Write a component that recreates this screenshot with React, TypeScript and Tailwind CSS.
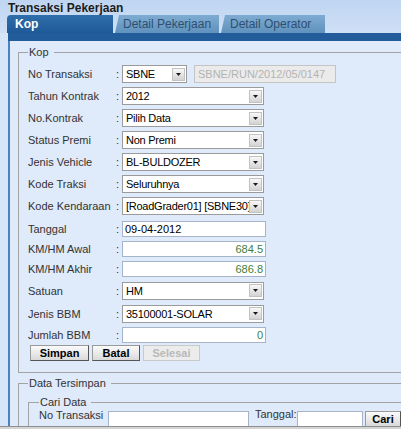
import React from "react";

const FONT = "font-['Liberation_Sans',Arial,sans-serif]";

function Arrow() {
  return (
    <div className="w-[13px] h-[13px] mr-[1px] shrink-0 flex items-center justify-center border border-[#c2c2c2] bg-linear-to-b from-[#f8f8f8] to-[#d3d3d3]">
      <svg width="5" height="3" viewBox="0 0 5 3">
        <path d="M0 0h5L2.5 3z" fill="#1a1a1a" />
      </svg>
    </div>
  );
}

function Sel({ v, w }: { v: string; w: string }) {
  return (
    <div className={`${w} h-[18px] shrink-0 flex items-center bg-white border border-[#9b9b9b]`}>
      <span className="flex-1 min-w-0 pl-[3px] text-[11px] leading-[14px] tracking-[-0.25px] text-black whitespace-nowrap">{v}</span>
      <Arrow />
    </div>
  );
}

function Txt({ v, right }: { v: string; right?: boolean }) {
  return (
    <div
      className={`w-[144px] h-[16px] shrink-0 flex items-center bg-white border border-[#a5b4c8] ${
        right ? "justify-end pr-[2px] text-[#3d7f3d]" : "pl-[2px] text-black"
      } text-[11px] leading-[14px]`}
    >
      {v}
    </div>
  );
}

function Row({ label, h, children }: { label: string; h: string; children: React.ReactNode }) {
  return (
    <div className={`flex items-center ${h}`}>
      <span className="w-[88px] shrink-0 text-[11px] leading-[14px] text-[#333] whitespace-nowrap">{label}</span>
      <span className="w-[6px] shrink-0 text-[11px] leading-[14px] text-[#333]">:</span>
      {children}
    </div>
  );
}

function Btn({ label, w, disabled }: { label: string; w: string; disabled?: boolean }) {
  return (
    <div
      className={`${w} h-[16px] flex items-center justify-center text-[11px] font-bold leading-[14px] border ${
        disabled
          ? "border-[#c9c9c9] text-[#b9b9b9] bg-[#ececec]"
          : "border-t-[#9a9a9a] border-l-[#9a9a9a] border-r-[#555] border-b-[#555] text-black bg-linear-to-b from-[#fbfbfb] to-[#d9d9d9]"
      }`}
    >
      {label}
    </div>
  );
}

export default function App() {
  return (
    <div className={`w-[401px] h-[429px] overflow-hidden flex flex-col bg-[#d6e5f8] ${FONT}`}>
      <div className="h-[426px] overflow-hidden">
        <div className="bg-linear-to-b from-[#bfd5f1] to-[#cfe0f6]">
          <div className="h-[15px] pl-[8px] pt-[1px] text-[12px] leading-[15px] font-bold text-[#1c1c1c] whitespace-nowrap">
            Transaksi Pekerjaan
          </div>
          <div className="flex h-[18px] pl-[7px] items-end">
            <div className="w-[106px] h-[18px] rounded-tl-[4px] bg-linear-to-b from-[#2f6dab] to-[#1e5a97] text-white text-[12px] font-bold leading-[18px] pl-[8px]">
              Kop
            </div>
            <div className="ml-[2px] w-[104px] h-[18px] bg-linear-to-b from-[#7eabd2] to-[#5f92bd] text-[#2f4f70] text-[12px] leading-[18px] pl-[8px] whitespace-nowrap [clip-path:polygon(4px_0,100%_0,100%_100%,0_100%)]">
              Detail Pekerjaan
            </div>
            <div className="ml-[2px] w-[104px] h-[18px] bg-linear-to-b from-[#7eabd2] to-[#5f92bd] text-[#2f4f70] text-[12px] leading-[18px] pl-[9px] whitespace-nowrap [clip-path:polygon(4px_0,100%_0,100%_100%,0_100%)]">
              Detail Operator
            </div>
          </div>
        </div>
        <div className="ml-[8px] w-[420px] h-[8px] bg-[#235c9b]" />
        <div className="ml-[8px] w-[420px] h-[400px] border-l-2 border-[#4a80c4] bg-[#dfeafa] pl-[8px] pt-[4px]">
          <fieldset className="w-[420px] border border-[#a3a3a3] pl-[9px] pt-[4px] pb-[11px]">
            <legend className="text-[11px] leading-[14px] text-[#333] pl-[1px] pr-[5px]">Kop</legend>
            <Row label="No Transaksi" h="h-[22px]">
              <Sel v="SBNE" w="w-[65px]" />
              <div className="ml-[7px] w-[142px] h-[18px] flex items-center pl-[3px] bg-[#ebebeb] border border-[#c4c4c4] text-[11px] leading-[14px] text-[#b3b3b3]">
                SBNE/RUN/2012/05/0147
              </div>
            </Row>
            <Row label="Tahun Kontrak" h="h-[22px]">
              <Sel v="2012" w="w-[142px]" />
            </Row>
            <Row label="No.Kontrak" h="h-[22px]">
              <Sel v="Pilih Data" w="w-[142px]" />
            </Row>
            <Row label="Status Premi" h="h-[22px]">
              <Sel v="Non Premi" w="w-[142px]" />
            </Row>
            <Row label="Jenis Vehicle" h="h-[22px]">
              <Sel v="BL-BULDOZER" w="w-[142px]" />
            </Row>
            <Row label="Kode Traksi" h="h-[22px]">
              <Sel v="Seluruhnya" w="w-[142px]" />
            </Row>
            <Row label="Kode Kendaraan" h="h-[22px]">
              <Sel v="[RoadGrader01] [SBNE30]" w="w-[142px]" />
            </Row>
            <div className="h-[2px]" />
            <Row label="Tanggal" h="h-[20px]">
              <Txt v="09-04-2012" />
            </Row>
            <Row label="KM/HM Awal" h="h-[20px]">
              <Txt v="684.5" right />
            </Row>
            <Row label="KM/HM Akhir" h="h-[20px]">
              <Txt v="686.8" right />
            </Row>
            <Row label="Satuan" h="h-[23px]">
              <Sel v="HM" w="w-[142px]" />
            </Row>
            <Row label="Jenis BBM" h="h-[23px]">
              <Sel v="35100001-SOLAR" w="w-[142px]" />
            </Row>
            <Row label="Jumlah BBM" h="h-[20px]">
              <Txt v="0" right />
            </Row>
            <div className="flex gap-[3px] pl-[2px] h-[16px]">
              <Btn label="Simpan" w="w-[59px]" />
              <Btn label="Batal" w="w-[48px]" />
              <Btn label="Selesai" w="w-[57px]" disabled />
            </div>
          </fieldset>
          <fieldset className="mt-[3px] w-[420px] border border-[#a3a3a3] pl-[9px] pt-[5px] pb-[10px]">
            <legend className="text-[11px] leading-[14px] text-[#333] pl-[1px] pr-[5px]">Data Tersimpan</legend>
            <fieldset className="w-[400px] border border-[#a3a3a3] pl-[10px] pt-0 pb-[10px]">
              <legend className="text-[11px] leading-[14px] text-[#333] pl-[1px] pr-[5px]">Cari Data</legend>
              <div className="flex items-start">
                <span className="w-[69px] -mt-[1px] text-[11px] leading-[14px] text-[#333] whitespace-nowrap">No Transaksi</span>
                <div className="mt-[2px] w-[141px] h-[18px] bg-white border border-[#a5b4c8]" />
                <span className="ml-[6px] w-[42px] -mt-[2px] text-[11px] leading-[14px] text-[#333]">Tanggal:</span>
                <div className="mt-[2px] w-[66px] h-[18px] bg-white border border-[#a5b4c8]" />
                <div className="ml-[2px] mt-[2px] w-[36px] h-[16px] flex items-start justify-center pt-[1px] text-[11px] font-bold leading-[13px] text-black border border-t-[#9a9a9a] border-l-[#9a9a9a] border-r-[#555] border-b-[#555] bg-linear-to-b from-[#fbfbfb] to-[#d9d9d9]">
                  Cari
                </div>
              </div>
            </fieldset>
          </fieldset>
        </div>
      </div>
      <div className="h-[3px] border-t border-[#8f8f8f] bg-[#d4d4d4]" />
    </div>
  );
}
